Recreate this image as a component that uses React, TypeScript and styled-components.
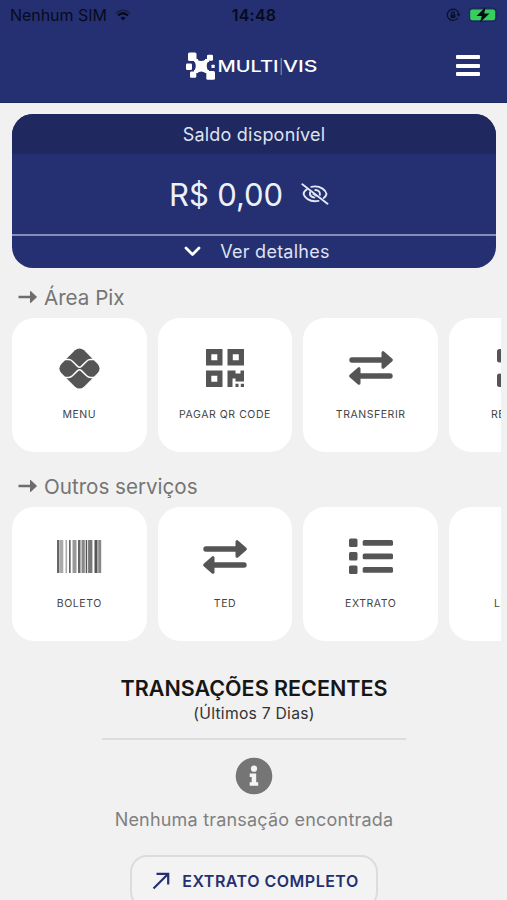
import React from "react";
import styled, { createGlobalStyle } from "styled-components";

const Global = createGlobalStyle`
  * { box-sizing: border-box; }
  body { margin: 0; background: #f1f1f1; overflow: hidden; }
  svg { display: block; flex: none; }
`;

const Screen = styled.div`
  width: 507px;
  height: 900px;
  overflow: hidden;
  display: flex;
  flex-direction: column;
  background: #f1f1f1;
  font-family: Inter, "Liberation Sans", sans-serif;
`;

const Header = styled.header`
  height: 103px;
  flex: none;
  background: #243071;
  border-bottom: 1px solid #1e2862;
`;

const StatusBar = styled.div`
  display: grid;
  grid-template-columns: 1fr auto 1fr;
  align-items: center;
  height: 30px;
  padding: 0 9px 0 10px;
  color: #070b1d;
  font-size: 16px;
  line-height: 20px;
`;

const StatusGroup = styled.div<{ $end?: boolean }>`
  display: flex;
  align-items: center;
  gap: 8px;
  justify-content: ${(p) => (p.$end ? "flex-end" : "flex-start")};
  letter-spacing: -0.05px;
`;

const Clock = styled.div`
  font-weight: 600;
  letter-spacing: 0.2px;
`;

const NavBar = styled.div`
  display: grid;
  grid-template-columns: 1fr 134px 1fr;
  align-items: center;
  height: 71px;
  padding: 0 27px 0 25px;
`;

const MenuButton = styled.button`
  grid-column: 3;
  justify-self: end;
  display: flex;
  flex-direction: column;
  gap: 4.5px;
  padding: 0;
  border: 0;
  background: none;
`;

const MenuLine = styled.span`
  width: 24px;
  height: 4px;
  border-radius: 1px;
  background: #fff;
`;

const LogoSlot = styled.div`
  grid-column: 2;
`;

const BalanceCard = styled.section`
  flex: none;
  margin: 11px 11px 0 12px;
  height: 154px;
  border-radius: 21px;
  overflow: hidden;
  background: #243071;
  color: #eef0fa;
`;

const BalanceTitle = styled.div`
  height: 40px;
  display: flex;
  align-items: center;
  justify-content: center;
  background: #1f285f;
  color: #dfe3f3;
  font-size: 18px;
  letter-spacing: 0.22px;
`;

const BalanceValue = styled.div`
  height: 80px;
  display: flex;
  align-items: center;
  justify-content: center;
  gap: 18px;
  padding-right: 10px;
  font-size: 31px;
  letter-spacing: -0.1px;
`;

const BalanceToggle = styled.div`
  height: 34px;
  display: flex;
  align-items: center;
  justify-content: center;
  gap: 19px;
  padding: 0 0 2px 6px;
  border-top: 2px solid #858db8;
  color: #dfe3f3;
  font-size: 18px;
  letter-spacing: 0.25px;
`;

const SectionTitle = styled.h2<{ $top: number }>`
  flex: none;
  display: flex;
  align-items: center;
  gap: 6px;
  margin: ${(p) => p.$top}px 0 0 18px;
  height: 30px;
  color: #757575;
  font-size: 20.6px;
  font-weight: 400;
`;

const TileRow = styled.div<{ $top: number }>`
  flex: none;
  display: flex;
  gap: 11px;
  margin: ${(p) => p.$top}px 5.7px 0 12px;
  overflow: hidden;
`;

const Tile = styled.div`
  flex: none;
  width: 134.7px;
  height: 134px;
  border-radius: 22px;
  background: #fff;
  display: flex;
  flex-direction: column;
  align-items: center;
  padding-top: 27px;
  color: #555;
`;

const TileIcon = styled.div`
  height: 46px;
  display: flex;
  align-items: center;
  justify-content: center;
`;

const TileLabel = styled.div`
  margin-top: 16px;
  font-size: 10.5px;
  line-height: 16px;
  letter-spacing: 0.55px;
  color: #444;
  white-space: nowrap;
`;

const Recent = styled.section`
  flex: none;
  display: flex;
  flex-direction: column;
  align-items: center;
  width: 304px;
  margin: 32px 0 0 102px;
`;

const RecentTitle = styled.h2`
  margin: 0;
  font-size: 21.5px;
  line-height: 30px;
  font-weight: 600;
  color: #161616;
  white-space: nowrap;
`;

const RecentPeriod = styled.div`
  font-size: 15.7px;
  line-height: 21px;
  letter-spacing: 0.25px;
  color: #333;
`;

const Rule = styled.div`
  align-self: stretch;
  height: 2px;
  margin: 14px 0 17px;
  background: #dcdcdc;
`;

const EmptyText = styled.p`
  margin: 13px 0 0;
  font-size: 18px;
  line-height: 24px;
  letter-spacing: 0.2px;
  color: #808080;
  white-space: nowrap;
`;

const StatementButton = styled.button`
  flex: none;
  display: flex;
  align-items: center;
  justify-content: center;
  gap: 12px;
  width: 248px;
  height: 54px;
  margin: 23px 0 0;
  padding: 0 0 2px 3px;
  border: 2px solid #dcdcdc;
  border-radius: 17px;
  background: #f3f3f3;
  color: #243071;
  font: 600 16px Inter, "Liberation Sans", sans-serif;
  letter-spacing: 0.5px;
  white-space: nowrap;
`;

const WifiIcon = () => (
  <svg width="16" height="12" viewBox="0 0 16 12" fill="none" stroke="#070b1d">
    <path d="M1 4.3Q8-1.8 15 4.3" strokeWidth="1.6" opacity=".45" />
    <path d="M3 6.5Q8 2 13 6.5" strokeWidth="2.3" />
    <path d="M5.5 8.8Q8 6.7 10.5 8.8L8 11.4Z" fill="#070b1d" stroke="none" />
  </svg>
);

const RotationLockIcon = () => (
  <svg width="15" height="14" viewBox="0 0 15 14" fill="none" stroke="#0b1029" strokeWidth="1.2">
    <path d="M11.7 10A5.7 5.7 0 1 1 12.7 7" />
    <path d="M10.6 6h4l-2 2.8z" fill="#0b1029" stroke="none" />
    <rect x="4.6" y="6.5" width="4.8" height="3.6" rx=".6" fill="#0b1029" stroke="none" />
    <path d="M5.6 6.7V5.3a1.4 1.4 0 0 1 2.8 0v1.4" />
  </svg>
);

const BatteryIcon = () => (
  <svg width="29" height="16" viewBox="0 0 29 16">
    <rect x=".2" y="1" width="27" height="13.5" rx="3.5" fill="none" stroke="#1b2657" />
    <rect x="1.2" y="2.4" width="25" height="10.8" rx="2.2" fill="#36cf5c" />
    <path d="M28 6v4q1.5-2 0-4z" fill="#1b2657" />
    <path d="M16.600 0 7.500 8.900h5.300l-2 6.800L20.500 6.500h-5.300z" fill="#080d18" />
  </svg>
);

const Logo = () => (
  <svg width="134" height="30" viewBox="0 0 134 30" fill="#fff">
    <path d="M11 8.5Q15.2 11.5 19.5 8.5L22 10.5Q19.5 15 22 19.5L19.5 22Q15.2 19 11 22L8.5 19.5Q11 15 8.5 10.5Z" />
    <rect x="2" y="1.5" width="8.500" height="8.500" rx="1.500" />
    <rect x="21" y="3.700" width="6" height="6" rx="1.200" />
    <rect x="0" y="12.500" width="6" height="6.500" rx="1.200" />
    <rect x="4" y="20.500" width="6.300" height="6.300" rx="1.200" />
    <rect x="20.300" y="20" width="8.700" height="8.700" rx="1.500" />
    <rect x="25.500" y="13.800" width="3.200" height="3.200" rx=".5" />
    <path d="M8 8h4v3H8zM19 8h4v3h-4zM8 19h4v3H8zM19 19h4v3h-4z" />
    <g fontFamily="Inter, sans-serif" fontSize="16" fontWeight="500">
      <text x="31.500" y="21" textLength="61" lengthAdjust="spacingAndGlyphs">MULTI</text>
      <text x="97" y="21" textLength="34.500" lengthAdjust="spacingAndGlyphs">VIS</text>
    </g>
    <rect x="94.700" y="7" width="1" height="17" opacity=".5" />
  </svg>
);

const EyeOffIcon = () => (
  <svg width="28" height="22" viewBox="0 0 28 22" fill="none" stroke="#e2e6f5" strokeWidth="1.9" strokeLinecap="round">
    <path d="M6 6.300C3.700 7.800 2.600 9.600 2.600 11 3.500 15 8.500 18.300 14 18.300q1.800 0 3.500-.4" />
    <path d="M10.300 3.800Q12 3.400 14 3.400C19.500 3.400 24.800 6.900 25.500 11q-.4 2.200-2.800 4" />
    <path d="M9 9.300Q8.300 13.500 13.300 14.600M14.300 7q5 .4 4.600 4.800" />
    <path d="M12.200 10.900 15 13.100" strokeWidth="1.300" />
    <path d="M1.300 1.300 26.500 20.700" />
  </svg>
);

const ChevronIcon = () => (
  <svg width="17" height="11" viewBox="0 0 17 11" fill="none" stroke="#fff" strokeWidth="2.800" strokeLinecap="round" strokeLinejoin="round">
    <path d="M2 2l6.500 6.500L15 2" />
  </svg>
);

const SectionArrow = () => (
  <svg width="20" height="14" viewBox="0 0 20 14" fill="#6d6d6d">
    <path d="M.5 5.700H12V1.300Q12 .6 12.700 1.100L18.600 6.400Q19.200 7 18.600 7.600L12.700 12.900Q12 13.400 12 12.700V8.300H.5z" />
  </svg>
);

const PixIcon = () => (
  <svg width="41" height="41" viewBox="0 0 41 41">
    <path
      d="M16 2.300Q20.500-1.500 25 2.300L38.700 16Q42.500 20.500 38.700 25L25 38.700Q20.500 42.500 16 38.700L2.300 25Q-1.500 20.500 2.300 16Z"
      fill="#555"
    />
    <path
      d="M5 11.500H9.500Q11.700 11.500 13.400 13.200L18.600 18.400Q20.500 20 22.400 18.400L27.600 13.200Q29.300 11.500 31.500 11.500H36M5 29.500H9.500Q11.700 29.500 13.400 27.800L18.600 22.600Q20.500 21 22.400 22.600L27.600 27.800Q29.300 29.500 31.500 29.500H36"
      fill="none"
      stroke="#fff"
      strokeWidth="1.500"
    />
  </svg>
);

const QrIcon = () => (
  <svg width="40" height="40" viewBox="0 0 40 40" fill="#555">
    <path
      fillRule="evenodd"
      d="M1 1h16.500v16.500H1zM6.300 6.300v6h6v-6zM22.500 1H39v16.500H22.500zM27.800 6.300v6h6v-6zM1 22.500h16.500V39H1zM6.300 27.800v6h6v-6z"
    />
    <path d="M22.500 22.500h8v3h5v-3H39v11h-8.500v-3h-3V39h-5zM30.500 35.800h3V39h-3zM35.800 35.800H39V39h-3.200z" />
  </svg>
);

const TransferIcon = () => (
  <svg width="44" height="36" viewBox="0 0 44 36" fill="#555" stroke="#555" strokeLinecap="round" strokeLinejoin="round">
    <path d="M3 10h32M41 26H9" strokeWidth="5.400" />
    <path d="M34 2.700v14.600l8.300-7.300zM10 18.700v14.600l-8.300-7.300z" strokeWidth="3" />
  </svg>
);

const ScanIcon = () => (
  <svg width="40" height="40" viewBox="0 0 40 40" fill="none" stroke="#555" strokeWidth="5" strokeLinecap="round" strokeLinejoin="round">
    <path d="M3.500 12V3.500H12M28 3.500h8.500V12M3.500 28v8.500H12M28 36.500h8.500V28" />
  </svg>
);

const bars: [number, number, string][] = [
  [0, 2.4, "#666"], [2.7, 3.6, "#aaa"], [8.5, 1.6, "#aaa"], [12.1, 1.5, "#555"],
  [15.5, 4, "#999"], [21, 2.5, "#666"], [24.5, 3.3, "#888"], [28.7, 1.5, "#555"],
  [31.1, 4.3, "#777"], [37.5, 3, "#555"], [41.2, 3, "#888"],
];

const BarcodeIcon = () => (
  <svg width="45" height="33" viewBox="0 0 45 33">
    {bars.map(([x, w, fill]) => (
      <rect key={x} x={x} y="0" width={w} height="33" fill={fill} />
    ))}
  </svg>
);

const ListIcon = () => (
  <svg width="44" height="37" viewBox="0 0 44 37" fill="#555">
    {[0.6, 14.1, 27.6].map((y) => (
      <React.Fragment key={y}>
        <rect x="0" y={y} width="8.500" height="8.500" rx="1.500" />
        <rect x="13.700" y={y + 1.4} width="30.300" height="5.800" rx="1.600" />
      </React.Fragment>
    ))}
  </svg>
);

const InfoIcon = () => (
  <svg width="38" height="38" viewBox="0 0 38 38">
    <circle cx="19" cy="19" r="18.300" fill="#757575" />
    <circle cx="19" cy="11.700" r="3.100" fill="#f4f4f4" />
    <path d="M14.700 16.500h6.500v8.800h2v3.400h-8.500v-3.400h2v-5.400h-2z" fill="#f4f4f4" />
  </svg>
);

const OpenIcon = () => (
  <svg width="18" height="18" viewBox="0 0 18 18" fill="none" stroke="#243071" strokeWidth="2.200">
    <path d="M1.500 16.500 16 2M4.500 1.900H16.200V12.500" />
  </svg>
);

const pixTiles = [
  { label: "MENU", icon: <PixIcon /> },
  { label: "PAGAR QR CODE", icon: <QrIcon /> },
  { label: "TRANSFERIR", icon: <TransferIcon /> },
  { label: "RECEBER", icon: <ScanIcon /> },
];

const serviceTiles = [
  { label: "BOLETO", icon: <BarcodeIcon /> },
  { label: "TED", icon: <TransferIcon /> },
  { label: "EXTRATO", icon: <ListIcon /> },
  { label: "LIMITES", icon: null },
];

type TileData = { label: string; icon: React.ReactNode };

const Tiles = ({ items, top }: { items: TileData[]; top: number }) => (
  <TileRow $top={top}>
    {items.map((item) => (
      <Tile key={item.label}>
        <TileIcon>{item.icon}</TileIcon>
        <TileLabel>{item.label}</TileLabel>
      </Tile>
    ))}
  </TileRow>
);

export default function App() {
  return (
    <Screen>
      <Global />
      <Header>
        <StatusBar>
          <StatusGroup>Nenhum SIM <WifiIcon /></StatusGroup>
          <Clock>14:48</Clock>
          <StatusGroup $end><RotationLockIcon /><BatteryIcon /></StatusGroup>
        </StatusBar>
        <NavBar>
          <LogoSlot><Logo /></LogoSlot>
          <MenuButton aria-label="Menu"><MenuLine /><MenuLine /><MenuLine /></MenuButton>
        </NavBar>
      </Header>
      <BalanceCard>
        <BalanceTitle>Saldo disponível</BalanceTitle>
        <BalanceValue>R$ 0,00 <EyeOffIcon /></BalanceValue>
        <BalanceToggle><ChevronIcon />Ver detalhes</BalanceToggle>
      </BalanceCard>
      <SectionTitle $top={14}><SectionArrow />Área Pix</SectionTitle>
      <Tiles items={pixTiles} top={6} />
      <SectionTitle $top={19}><SectionArrow />Outros serviços</SectionTitle>
      <Tiles items={serviceTiles} top={5.5} />
      <Recent>
        <RecentTitle>TRANSAÇÕES RECENTES</RecentTitle>
        <RecentPeriod>(Últimos 7 Dias)</RecentPeriod>
        <Rule />
        <InfoIcon />
        <EmptyText>Nenhuma transação encontrada</EmptyText>
        <StatementButton><OpenIcon />EXTRATO COMPLETO</StatementButton>
      </Recent>
    </Screen>
  );
}
